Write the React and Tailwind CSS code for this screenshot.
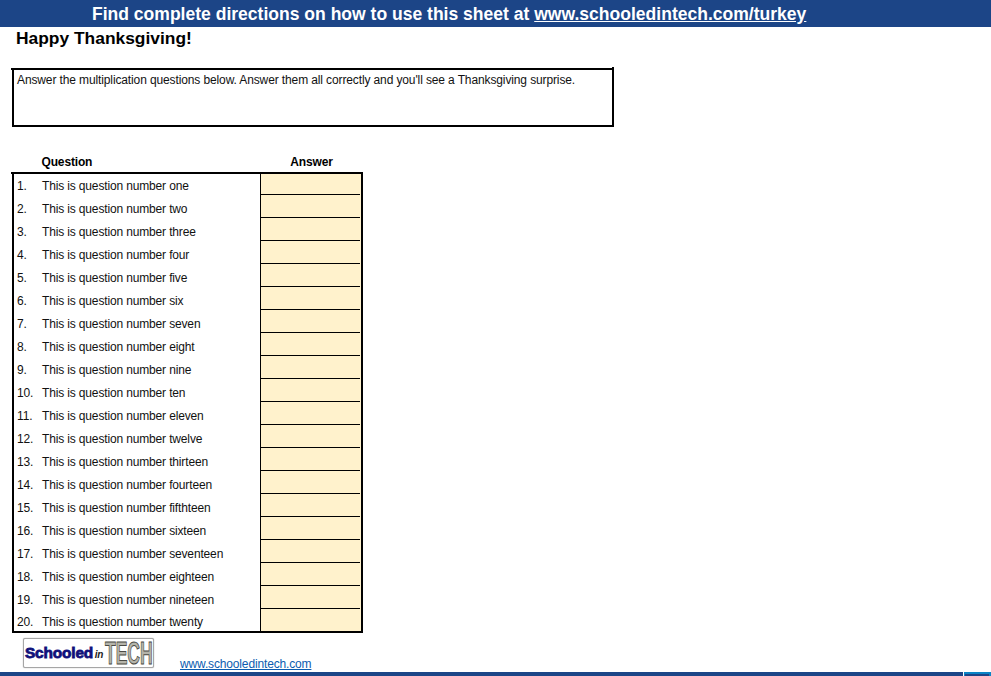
const questions = [
  "one", "two", "three", "four", "five", "six", "seven", "eight", "nine", "ten",
  "eleven", "twelve", "thirteen", "fourteen", "fifthteen", "sixteen", "seventeen",
  "eighteen", "nineteen", "twenty",
];

function Logo() {
  return (
    <div className="w-[131px] h-[30px] border border-[#a6a6a6] rounded-[2px] bg-white flex items-center pl-[1px] shadow-[0_0_1px_#888]">
      <span className="w-[68px] shrink-0 text-[15.4px] leading-none font-black text-[#10107a] [-webkit-text-stroke:0.8px_#10107a]">Schooled</span>
      <span className="w-[12px] shrink-0 text-center text-[10px] leading-none italic font-bold text-[#222] mt-[3px]">in</span>
      <span className="w-[48px] shrink-0 origin-left scale-x-[0.55] text-[32px] leading-none font-bold text-[#b4b4aa] [-webkit-text-stroke:1px_#4a4a44]">TECH</span>
    </div>
  );
}

export default function App() {
  return (
    <div className="w-[991px] h-[676px] bg-white overflow-hidden flex flex-col font-['Liberation_Sans',Arial,sans-serif] text-[12px] tracking-[-0.15px] text-[#111]">
      <div className="h-[27px] shrink-0 bg-[#1c4587] text-white font-bold text-[17.55px] tracking-normal leading-[29px] pl-[92px] whitespace-nowrap">
        Find complete directions on how to use this sheet at <a href="#" className="underline">www.schooledintech.com/turkey</a>
      </div>

      <h1 className="h-[23px] mt-[1px] ml-[16px] text-[17.4px] tracking-normal leading-[21px] font-bold text-black">Happy Thanksgiving!</h1>

      <div className="relative mt-[17px] ml-[12px] w-[602px] h-[59px] border-2 border-black pl-[3px] pt-[2px] leading-[16px] tracking-[-0.12px]">
        <span className="absolute -left-[3px] -top-[2px] w-px h-[2px] bg-black"></span>
        <span className="absolute -right-[2px] -top-[3px] w-[2px] h-px bg-black"></span>
        Answer the multiplication questions below. Answer them all correctly and you'll see a Thanksgiving surprise.
      </div>

      <div className="mt-[27px] ml-[12px] w-[351px] h-[18px] flex font-bold text-black leading-[16px]">
        <div className="w-[248px] pl-[29.5px]">Question</div>
        <div className="w-[103px] text-center">Answer</div>
      </div>

      <div className="relative ml-[12px] w-[351px] h-[461px] border-2 border-black flex flex-col">
        <span className="absolute -left-[3px] -top-[2px] w-px h-[2px] bg-black"></span>
        {questions.map((q, i) => (
          <div key={q} className={"flex items-end " + (i === 0 ? "h-[21px]" : i === 19 ? "h-[22px]" : "h-[23px]")}>
            <div className="w-[25px] pl-[3px] leading-[18px]">{i + 1}.</div>
            <div className="w-[221px] pl-[3px] leading-[18px]">This is question number {q}</div>
            <div className="flex-1 self-stretch border-l border-black bg-[#fff2cc] flex flex-col justify-end">
              {i < 19 && <div className="h-px mr-[1px] bg-black"></div>}
            </div>
          </div>
        ))}
      </div>

      <div className="flex mt-[5px] ml-[23px] h-[34px]">
        <Logo />
        <a href="#" className="ml-[26px] mt-[19px] h-[14px] leading-[14px] underline text-[#0b5cb0]">www.schooledintech.com</a>
      </div>

      <div className="h-[4px] shrink-0 flex bg-[#1c4587]">
        <div className="w-[963px]"></div>
        <div className="flex-1 bg-[#0a84c6] border-l border-white pt-[2px]">
          <div className="h-[2px] w-[24px] ml-[1px] bg-[#1c4587]"></div>
        </div>
      </div>
    </div>
  );
}
